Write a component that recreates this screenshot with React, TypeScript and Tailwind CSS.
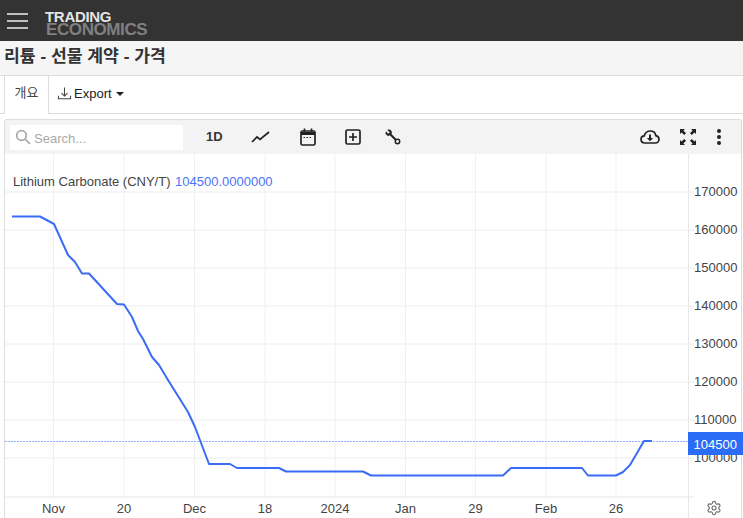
import { Settings } from 'lucide-react';

const FONT = '"Liberation Sans", "Noto Sans CJK KR", sans-serif';

const yTicks = [
  { label: '170000', y: 192 },
  { label: '160000', y: 230 },
  { label: '150000', y: 268 },
  { label: '140000', y: 306 },
  { label: '130000', y: 344 },
  { label: '120000', y: 382 },
  { label: '110000', y: 420 },
  { label: '100000', y: 458 },
];

const xTicks = [
  { label: 'Nov', x: 53.5 },
  { label: '20', x: 124 },
  { label: 'Dec', x: 194.5 },
  { label: '18', x: 265 },
  { label: '2024', x: 335 },
  { label: 'Jan', x: 405.5 },
  { label: '29', x: 475.5 },
  { label: 'Feb', x: 546 },
  { label: '26', x: 616 },
];

const line =
  '12,216.5 40,216.5 54,224 68,255 75,262 82,273.5 89,273.5 117,304 124,304.5 132,317 138,331 143,339 ' +
  '152,357 159,365 168,380 188,412 195,427 209,464 230,464 237,468 279,468 286,471.5 363,471.5 371,475.5 ' +
  '503,475.5 511,468 582,468 588,475.5 616,475.5 623,472 630,465 644,441 652,441';

function Chart() {
  // chart coordinates are page pixels, the svg sits at x=5 y=154
  return (
    <svg width="738" height="364" viewBox="5 154 738 364" className="block">
      {xTicks.map((t) => (
        <line key={t.label} x1={t.x} x2={t.x} y1={154} y2={497} stroke="#eef0f5" />
      ))}
      {yTicks.map((t) => (
        <line key={t.label} x1={5} x2={694} y1={t.y} y2={t.y} stroke="#ececec" />
      ))}
      <line x1={5} x2={694} y1={497} y2={497} stroke="#e6e6e6" />
      <line x1={688.5} x2={688.5} y1={154} y2={518} stroke="#e6e6e6" />
      <line x1={5} x2={688} y1={441.5} y2={441.5} stroke="#8fb0ff" strokeDasharray="2 1" />
      <polyline points={line} fill="none" stroke="#3a6cf6" strokeWidth="2" strokeLinejoin="round" />
      <text x={13} y={186} fontSize="13" fill="#444">Lithium Carbonate (CNY/T)</text>
      <text x={175} y={186} fontSize="13" fill="#4a74f5">104500.0000000</text>
      {yTicks.map((t) => (
        <text key={t.label} x={694} y={t.y + 4} fontSize="13" fill="#444">{t.label}</text>
      ))}
      <rect x={688} y={432} width={55} height={23} fill="#2b6cf6" />
      <text x={693.5} y={448.5} fontSize="13" fill="#fff">104500</text>
      {xTicks.map((t) => (
        <text key={t.label} x={t.x} y={513} fontSize="13" fill="#444" textAnchor="middle">{t.label}</text>
      ))}
    </svg>
  );
}

export default function App() {
  return (
    <div className="h-[518px] w-[743px] overflow-hidden bg-white" style={{ fontFamily: FONT }}>
      {/* Header */}
      <div className="flex h-[41px] items-center bg-[#333333]">
        <div className="ml-[7px] mt-[1px] flex w-[21px] flex-col gap-[5px]">
          <div className="h-[2px] bg-[#c0c0c0]" />
          <div className="h-[2px] bg-[#c0c0c0]" />
          <div className="h-[2px] bg-[#c0c0c0]" />
        </div>
        <div className="ml-[17px] mt-[5px] text-[15px] font-bold leading-[12px] tracking-[-0.3px]">
          <div className="text-[#e4e4e4]">TRADING</div>
          <div className="ml-[1px] text-[17px] leading-[13px] tracking-[-0.4px] text-[#808080]">ECONOMICS</div>
        </div>
      </div>

      {/* Title */}
      <div className="flex h-[35px] items-center border-b border-[#dddddd] bg-[#f5f5f5] pb-[3px] pl-[4px]">
        <h1 className="text-[17.2px] font-bold text-[#333333]">리튬 - 선물 계약 - 가격</h1>
      </div>

      {/* Tabs */}
      <div className="flex h-[38px] border-b border-[#dddddd]">
        <div className="mb-[-1px] ml-[4px] flex w-[45px] items-center justify-center border-x border-[#dddddd] bg-white pb-[5px] text-[13px] text-[#444444]">
          개요
        </div>
        <div className="ml-[8px] flex items-center gap-[2px] pb-[2px] text-[13px] text-[#222222]">
          <svg width="15" height="15" viewBox="0 0 16 16" fill="none" stroke="#444" strokeWidth="1.1">
            <path d="M8 1.5v9M4.8 7.5 8 10.7l3.2-3.2M1.5 10.5v3h13v-3" />
          </svg>
          Export
          <span className="ml-[2px] h-0 w-0 border-x-[4px] border-t-[4px] border-x-transparent border-t-[#222222]" />
        </div>
      </div>

      {/* Chart box */}
      <div className="ml-[4px] mt-[5px] w-[738px] rounded-t-[3px] border-l border-t border-r border-[#dddddd]">
        <div className="flex h-[34px] items-center bg-[#f3f3f3]">
          <div className="ml-[5px] flex h-[25px] w-[173px] items-center bg-white pl-[5px]">
            <svg width="16" height="16" viewBox="0 0 16 16" fill="none" stroke="#a8a8a8" strokeWidth="1.7">
              <circle cx="6.5" cy="6.5" r="4.8" />
              <path d="m10 10 5 5" />
            </svg>
            <span className="ml-[3px] mt-[4px] text-[13px] text-[#a9a9a9]">Search...</span>
          </div>
          <span className="ml-[23px] w-[16px] text-[13px] font-bold text-[#333333]">1D</span>
          <svg className="ml-[29px]" width="19" height="14" viewBox="0 0 19 14" fill="none" stroke="#222" strokeWidth="1.7">
            <path d="m1 12 5-5 3 2.5L18 2" />
          </svg>
          <svg className="ml-[30px]" width="16" height="18" viewBox="0 0 16 18" fill="none" stroke="#222" strokeWidth="1.7">
            <rect x="1" y="3" width="14" height="14" rx="1.5" />
            <path d="M1 5.5h14" strokeWidth="3" />
            <path d="M4.5 0.5v3M11.5 0.5v3" />
            <path d="M3.5 9.5h9" strokeDasharray="1.5 1.5" strokeWidth="1.2" />
          </svg>
          <svg className="ml-[29px]" width="16" height="16" viewBox="0 0 16 16" fill="none" stroke="#222" strokeWidth="1.7">
            <rect x="1" y="1" width="14" height="14" rx="1.5" />
            <path d="M8 4v8M4 8h8" />
          </svg>
          {/* double ended wrench */}
          <svg className="ml-[24px]" width="16" height="16" viewBox="0 0 16 16" fill="none" stroke="#222">
            <path d="M5.5 5.5 11 11" strokeWidth="2" />
            <path d="M1 2.8 3.3 5 5 3.3 2.8 1C4.6.2 7 1.5 6.5 4 6.2 5.6 4.5 6.8 2.8 6.5 1.3 6.1.5 4.5 1 2.8Z" fill="#222" strokeWidth="0.6" />
            <circle cx="12.5" cy="12.5" r="2.2" strokeWidth="1.5" />
          </svg>
          <svg className="ml-auto" width="20" height="14" viewBox="0 0 20 14" fill="none" stroke="#222" strokeWidth="1.7">
            <path d="M5 13C2.5 13 1 11.3 1 9.3c0-2 1.5-3.3 3.2-3.4C5 3 7.5 1 10.3 1c3 0 5.2 2 5.5 4.7 2 .3 3.2 1.800 3.2 3.600 0 2-1.500 3.700-3.600 3.700H5Z" />
            <path d="M10 4.5V9" strokeWidth="2" />
            <path d="M6.8 8h6.4L10 11.2Z" fill="#222" stroke="none" />
          </svg>
          <svg className="ml-[20px]" width="16" height="16" viewBox="0 0 16 16" fill="#222">
            <path d="M0 0h5L3.4 1.6 6 4.2 4.2 6 1.6 3.4 0 5ZM16 0v5l-1.600-1.600L11.800 6 10 4.200l2.600-2.600L11 0ZM0 16v-5l1.600 1.600L4.200 10 6 11.800l-2.600 2.600L5 16ZM16 16h-5l1.600-1.600L10 11.800 11.800 10l2.600 2.600L16 11Z" />
          </svg>
          <div className="ml-[21px] mr-[20px] flex flex-col gap-[2px]">
            <div className="h-[4px] w-[4px] rounded-full bg-[#222222]" />
            <div className="h-[4px] w-[4px] rounded-full bg-[#222222]" />
            <div className="h-[4px] w-[4px] rounded-full bg-[#222222]" />
          </div>
        </div>
        <div className="relative">
          <Chart />
          <Settings className="absolute bottom-[2px] right-[19px]" size={16} color="#666666" strokeWidth={1.6} />
        </div>
      </div>
    </div>
  );
}
